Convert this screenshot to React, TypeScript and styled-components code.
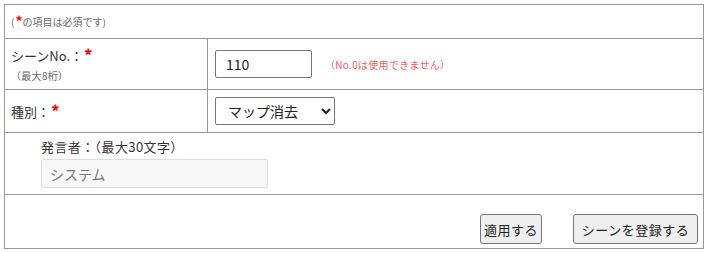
import React, { useState } from 'react';
import styled, { createGlobalStyle } from 'styled-components';

const GlobalStyle = createGlobalStyle`
  body {
    margin: 0;
    background: #fff;
    font-family: "Noto Sans CJK JP", "Noto Sans", sans-serif;
    color: #333;
  }
`;

const Panel = styled.div`
  margin: 4px 0 0 4px;
  width: 700px;
  border: 1px solid #999;
  box-sizing: border-box;
`;

const NoteRow = styled.div`
  height: 34px;
  box-sizing: border-box;
  display: flex;
  align-items: center;
  padding-left: 6px;
  border-bottom: 1px solid #999;
  font-size: 10px;
  color: #666;
`;

const Required = styled.span<{ $size?: number }>`
  color: #f00;
  font-size: ${p => p.$size ?? 17}px;
  font-weight: bold;
  line-height: 1;
  position: relative;
  top: -1px;
  margin-left: 1px;
`;

const FieldRow = styled.div<{ $height: number }>`
  display: grid;
  grid-template-columns: 203px 1fr;
  height: ${p => p.$height}px;
  border-bottom: 1px solid #999;
  box-sizing: border-box;
`;

const LabelCell = styled.div<{ $top: number }>`
  border-right: 1px solid #999;
  padding: ${p => p.$top}px 6px 0;
  font-size: 13px;
`;

const LabelLine = styled.div`
  display: flex;
  align-items: center;
  height: 20px;
`;

const SubLabel = styled.div`
  font-size: 10px;
  color: #666;
  margin-top: 3px;
  letter-spacing: 0.3px;
`;

const ValueCell = styled.div`
  display: flex;
  align-items: center;
  padding-left: 7px;
  gap: 13px;
`;

const NumberInput = styled.input`
  width: 97px;
  height: 28px;
  box-sizing: border-box;
  border: 1px solid #767676;
  border-radius: 2px;
  padding: 0 10px;
  font-family: inherit;
  font-size: 14px;
  color: #222;
`;

const Hint = styled.span`
  font-size: 10px;
  color: #f06060;
  letter-spacing: 0.3px;
`;

const Select = styled.select`
  width: 120px;
  height: 28px;
  box-sizing: border-box;
  border: 1px solid #767676;
  border-radius: 2px;
  padding: 0 8px;
  font-family: inherit;
  font-size: 14px;
  color: #222;
  background: #fff;
`;

const SpeakerRow = styled.div`
  height: 62px;
  box-sizing: border-box;
  border-bottom: 1px solid #999;
  padding: 5px 0 0 36px;
`;

const SpeakerLabel = styled.div`
  font-size: 13px;
  line-height: 18px;
  color: #333;
  letter-spacing: 0.4px;
`;

const SpeakerInput = styled.input`
  display: block;
  margin-top: 3px;
  width: 227px;
  height: 29px;
  box-sizing: border-box;
  border: 1px solid #ddd;
  border-radius: 2px;
  background: #f8f8f8;
  padding: 0 8px;
  font-family: inherit;
  font-size: 14px;
  color: #777;
`;

const ButtonRow = styled.div`
  height: 53px;
  display: flex;
  justify-content: flex-end;
  align-items: flex-end;
  gap: 31px;
  padding: 0 5px 4px 0;
  box-sizing: border-box;
`;

const Button = styled.button<{ $width: number }>`
  width: ${p => p.$width}px;
  height: 30px;
  box-sizing: border-box;
  padding: 0;
  border: 1px solid #767676;
  border-radius: 3px;
  background: #efefef;
  font-family: inherit;
  font-size: 13px;
  letter-spacing: 0.5px;
  color: #222;
`;

const App = () => {
  const [sceneNo, setSceneNo] = useState('110');
  const [kind, setKind] = useState('map-clear');

  return (
    <>
      <GlobalStyle />
      <Panel>
        <NoteRow>
          (<Required $size={14}>*</Required>の項目は必須です)
        </NoteRow>
        <FieldRow $height={51}>
          <LabelCell $top={6}>
            <LabelLine>
              シーンNo.：<Required>*</Required>
            </LabelLine>
            <SubLabel>（最大8桁）</SubLabel>
          </LabelCell>
          <ValueCell>
            <NumberInput
              type="text"
              value={sceneNo}
              onChange={e => setSceneNo(e.currentTarget.value)}
            />
            <Hint>（No.0は使用できません）</Hint>
          </ValueCell>
        </FieldRow>
        <FieldRow $height={43}>
          <LabelCell $top={11}>
            <LabelLine>
              種別：<Required>*</Required>
            </LabelLine>
          </LabelCell>
          <ValueCell>
            <Select value={kind} onChange={e => setKind(e.currentTarget.value)}>
              <option value="map-clear">マップ消去</option>
              <option value="map-show">マップ表示</option>
            </Select>
          </ValueCell>
        </FieldRow>
        <SpeakerRow>
          <SpeakerLabel>発言者：（最大30文字）</SpeakerLabel>
          <SpeakerInput type="text" value="システム" readOnly />
        </SpeakerRow>
        <ButtonRow>
          <Button $width={62}>適用する</Button>
          <Button $width={125}>シーンを登録する</Button>
        </ButtonRow>
      </Panel>
    </>
  );
};

export default App;
